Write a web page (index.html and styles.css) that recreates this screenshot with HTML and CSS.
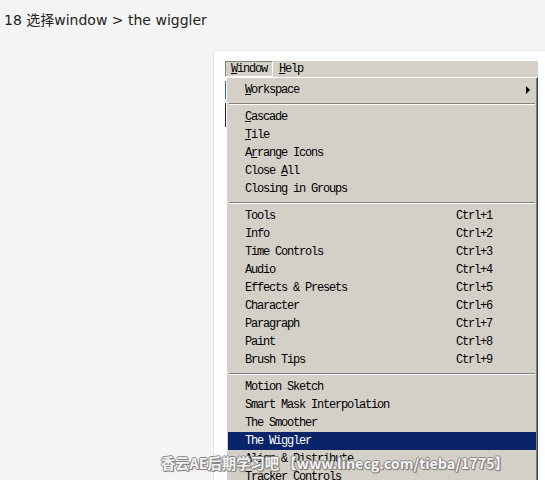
FILE: index.html
```html
<!DOCTYPE html>
<html lang="zh-CN">
<head>
    <meta charset="UTF-8">
    <meta name="viewport" content="width=device-width, initial-scale=1.0">
    <title>18 选择window &gt; the wiggler</title>
    <link rel="stylesheet" href="styles.css">
</head>
<body>
    <p class="step">18 选择window &gt; the wiggler</p>

    <div class="shot-frame">
        <div class="shot">
            <div class="menubar">
                <span class="bar-item active"><u>W</u>indow</span>
                <span class="bar-item"><u>H</u>elp</span>
            </div>

            <div class="menu-row">
                <div class="under-strip"></div>
                <div class="menu">
                    <div class="item"><span><u>W</u>orkspace</span><span class="arrow"></span></div>
                    <div class="sep"></div>
                    <div class="item"><span><u>C</u>ascade</span></div>
                    <div class="item"><span><u>T</u>ile</span></div>
                    <div class="item"><span>A<u>r</u>range Icons</span></div>
                    <div class="item"><span>Close <u>A</u>ll</span></div>
                    <div class="item"><span>Closing in Groups</span></div>
                    <div class="sep"></div>
                    <div class="item"><span>Tools</span><span>Ctrl+1</span></div>
                    <div class="item"><span>Info</span><span>Ctrl+2</span></div>
                    <div class="item"><span>Time Controls</span><span>Ctrl+3</span></div>
                    <div class="item"><span>Audio</span><span>Ctrl+4</span></div>
                    <div class="item"><span>Effects &amp; Presets</span><span>Ctrl+5</span></div>
                    <div class="item"><span>Character</span><span>Ctrl+6</span></div>
                    <div class="item"><span>Paragraph</span><span>Ctrl+7</span></div>
                    <div class="item"><span>Paint</span><span>Ctrl+8</span></div>
                    <div class="item"><span>Brush Tips</span><span>Ctrl+9</span></div>
                    <div class="sep"></div>
                    <div class="item"><span>Motion Sketch</span></div>
                    <div class="item"><span>Smart Mask Interpolation</span></div>
                    <div class="item"><span>The Smoother</span></div>
                    <div class="item selected"><span>The Wiggler</span></div>
                    <div class="item"><span>Align &amp; Distribute</span></div>
                    <div class="item"><span>Tracker Controls</span></div>
                </div>
            </div>
        </div>
    </div>

    <div class="watermark">香云AE后期学习吧 【www.linecg.com/tieba/1775】</div>
</body>
</html>
```

FILE: styles.css
```css
html, body {
    height: 100%;
}

body {
    margin: 0;
    background-color: #f4f4f4;
    overflow: hidden;
    position: relative;
}

.step {
    margin: 0;
    padding: 11px 4px 0;
    line-height: 18px;
    font-family: "DejaVu Sans", Verdana, "Noto Sans CJK SC", sans-serif;
    font-size: 14px;
    color: #222;
}

.shot-frame {
    margin: 21px 0 0 213px;
    height: 600px;
    padding: 10px 0 0 11px;
    background: #fdfdfd;
    border-top: 1px solid #e6e6e6;
    border-left: 1px solid #e6e6e6;
}

.shot {
    width: 313px;
    font-family: "Liberation Mono", "DejaVu Sans Mono", monospace;
    font-size: 12px;
    letter-spacing: -1.2px;
    color: #000;
}

.menubar {
    display: flex;
    height: 16px;
    background: #d4d0c8;
}

.bar-item {
    padding: 1px 5px 0;
    line-height: 13px;
    border: 1px solid transparent;
}

.bar-item.active {
    border-color: #808080 #fff #fff #808080;
}

.menu-row {
    display: flex;
}

.under-strip {
    width: 1px;
    height: 120px;
    background: linear-gradient(#fff 0, #fff 4px, #3a5fb0 4px, #3a5fb0 22px, #fff 22px, #fff 26px, #222 26px, #222 50px, #fff 50px);
}

.menu {
    width: 308px;
    padding: 3px 1px 2px;
    background: #d4d0c8;
    border: 1px solid;
    border-color: #fff #404040 #404040 #fff;
    box-shadow: inset -1px -1px 0 #808080;
}

.item {
    display: grid;
    grid-template-columns: 211px 1fr;
    height: 18px;
    line-height: 18px;
    padding-left: 17px;
    white-space: nowrap;
}

.item.selected {
    background: #0a246a;
    color: #fff;
}

.arrow {
    justify-self: end;
    align-self: center;
    margin-right: 6px;
    width: 0;
    height: 0;
    border-top: 4px solid transparent;
    border-bottom: 4px solid transparent;
    border-left: 4px solid #000;
}

.sep {
    height: 9px;
    margin: 0 1px;
    background: linear-gradient(transparent 0, transparent 4px, #808080 4px, #808080 5px, #fff 5px, #fff 6px, transparent 6px);
}

.watermark {
    position: absolute;
    left: 161px;
    top: 453px;
    font-family: "Noto Sans CJK SC", "DejaVu Sans", sans-serif;
    font-weight: bold;
    font-size: 14.3px;
    line-height: 20px;
    color: rgba(255, 255, 255, 0.92);
    text-shadow: 1px 0 0 #888, -1px 0 0 #888, 0 1px 0 #888, 0 -1px 0 #888, 1px 1px 1px #666;
    white-space: nowrap;
}
```
